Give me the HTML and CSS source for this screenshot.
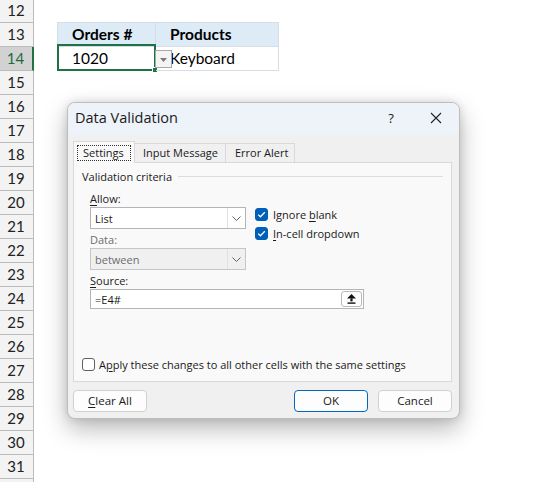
FILE: index.html
```html
<!DOCTYPE html>
<html>
<head>
<meta charset="utf-8">
<link rel="stylesheet" href="styles.css">
</head>
<body>
<div class="sheet">
  <div class="row"><div class="rh">12</div></div>
  <div class="row"><div class="rh">13</div><div class="gap"></div><div class="cell colb th">Orders #</div><div class="cell colc th">Products</div></div>
  <div class="row"><div class="rh selrow">14</div><div class="gap"></div><div class="cell colb td">1020<span class="outline"></span><span class="handle"></span></div><div class="cell colc td">Keyboard<span class="ddbtn"><svg width="7" height="4" viewBox="0 0 7 4"><path d="M0 0H7L3.5 4Z" fill="#7a7a7a"/></svg></span></div></div>
  <div class="row"><div class="rh">15</div></div>
  <div class="row"><div class="rh">16</div></div>
  <div class="row"><div class="rh">17</div></div>
  <div class="row"><div class="rh">18</div></div>
  <div class="row"><div class="rh">19</div></div>
  <div class="row"><div class="rh">20</div></div>
  <div class="row"><div class="rh">21</div></div>
  <div class="row"><div class="rh">22</div></div>
  <div class="row"><div class="rh">23</div></div>
  <div class="row"><div class="rh">24</div></div>
  <div class="row"><div class="rh">25</div></div>
  <div class="row"><div class="rh">26</div></div>
  <div class="row"><div class="rh">27</div></div>
  <div class="row"><div class="rh">28</div></div>
  <div class="row"><div class="rh">29</div></div>
  <div class="row"><div class="rh">30</div></div>
  <div class="row"><div class="rh">31</div></div>
  <div class="row"><div class="rh"></div></div>
</div>

<div class="dialog">
  <div class="titlebar">
    <span class="title">Data Validation</span>
    <span class="help">?</span>
    <span class="close"><svg width="12" height="12" viewBox="0 0 12 12"><path d="M1 1L11 11M11 1L1 11" stroke="#222" stroke-width="1.1"/></svg></span>
  </div>
  <div class="dbody">
    <div class="tabs">
      <div class="tab active"><span class="focus">Settings</span></div>
      <div class="tab">Input Message</div>
      <div class="tab">Error Alert</div>
    </div>
    <div class="panel">
      <div class="grouphead"><span>Validation criteria</span><span class="rule"></span></div>
      <div class="criteria">
        <div class="leftcol">
          <div class="lbl"><u>A</u>llow:</div>
          <div class="select"><span class="val">List</span><span class="arrow"><svg width="9" height="5" viewBox="0 0 9 5"><path d="M0.5 0.5L4.5 4.5L8.5 0.5" fill="none" stroke="#606060" stroke-width="1"/></svg></span></div>
          <div class="lbl dis">Data:</div>
          <div class="select disabled"><span class="val">between</span><span class="arrow"><svg width="9" height="5" viewBox="0 0 9 5"><path d="M0.5 0.5L4.5 4.5L8.5 0.5" fill="none" stroke="#606060" stroke-width="1"/></svg></span></div>
        </div>
        <div class="checks">
          <div class="chk"><span class="box on"><svg width="13" height="13" viewBox="0 0 13 13"><path d="M3.2 6.6L5.4 8.8L9.8 4.2" fill="none" stroke="#fff" stroke-width="1.3"/></svg></span><span>Ignore <u>b</u>lank</span></div>
          <div class="chk"><span class="box on"><svg width="13" height="13" viewBox="0 0 13 13"><path d="M3.2 6.6L5.4 8.8L9.8 4.2" fill="none" stroke="#fff" stroke-width="1.3"/></svg></span><span><u>I</u>n-cell dropdown</span></div>
        </div>
      </div>
      <div class="lbl src"><u>S</u>ource:</div>
      <div class="source"><span class="val">=E4#</span><span class="srcbtn"><svg width="9" height="10" viewBox="0 0 9 10"><path d="M4.5 0L9 4.6H0Z" fill="#111"/><rect x="3.4" y="4.4" width="2.2" height="3" fill="#111"/><rect x="0.5" y="8.4" width="8" height="1.4" fill="#111"/></svg></span></div>
      <div class="chk apply"><span class="box"></span><span>A<u>p</u>ply these changes to all other cells with the same settings</span></div>
    </div>
    <div class="buttons">
      <div class="btn"><u>C</u>lear All</div>
      <div class="spacer"></div>
      <div class="btn primary">OK</div>
      <div class="btn">Cancel</div>
    </div>
  </div>
</div>
</body>
</html>
```
FILE: styles.css
```css
* { box-sizing: border-box; }
html, body { margin: 0; padding: 0; }
body {
  width: 533px;
  height: 482px;
  overflow: hidden;
  background: #fff;
  position: relative;
  font-family: "Lato", "Liberation Sans", sans-serif;
}
u { text-decoration: underline; text-underline-offset: 2px; text-decoration-thickness: 1px; }

.sheet { margin-top: -1px; }
.row { display: flex; height: 24px; align-items: flex-start; }
.rh {
  width: 34px;
  height: 24px;
  flex: none;
  background: #f3f3f3;
  border-right: 1px solid #bcbcbc;
  border-bottom: 1px solid #bcbcbc;
  font-size: 15px;
  color: #222;
  text-align: center;
  line-height: 23px;
  padding-right: 1px;
}
.rh.selrow {
  background: #d2d2d2;
  color: #1d6b3e;
  border-right: 2px solid #217346;
}
.gap { width: 23px; flex: none; }
.cell {
  position: relative;
  height: 24px;
  border-right: 1px solid #d6dde6;
  border-bottom: 1px solid #d6dde6;
  font-size: 15.5px;
  line-height: 23px;
  color: #000;
  padding-left: 14px;
  flex: none;
}
.colb { width: 99px; border-left: 1px solid #d6dde6; }
.colc { width: 123px; padding-left: 14px; }
.th {
  background: #ddebf7;
  font-weight: bold;
  height: 25px;
  margin-top: -1px;
  border-top: 1px solid #d6dde6;
  line-height: 23px;
}
.td { line-height: 23px; }
.outline {
  position: absolute;
  left: -1px;
  top: -3px;
  right: -1px;
  bottom: -1px;
  border: 2px solid #1e7145;
}
.handle {
  position: absolute;
  right: -3px;
  bottom: -3px;
  width: 6px;
  height: 6px;
  background: #1e7145;
  border: 1px solid #fff;
}
.ddbtn {
  position: absolute;
  left: -1px;
  top: 3px;
  width: 17px;
  height: 18px;
  background: #f4f4f4;
  border: 1px solid #a8a8a8;
  display: flex;
  align-items: center;
  justify-content: center;
  padding-top: 1px;
}

/* dialog */
.dialog {
  position: absolute;
  left: 67px;
  top: 102px;
  width: 393px;
  height: 317px;
  border: 1px solid #bdbdbd;
  border-radius: 8px;
  background: #f0f0f0;
  box-shadow: 0 10px 24px rgba(0,0,0,0.28), 0 0 8px rgba(0,0,0,0.12);
  overflow: hidden;
  font-family: "Open Sans", "Noto Sans", sans-serif;
  font-size: 11px;
  color: #1a1a1a;
}
.titlebar {
  height: 32px;
  background: #eef2f9;
  display: flex;
  align-items: center;
  padding-left: 7px;
  padding-bottom: 3px;
}
.title { font-size: 14.5px; flex: 1; color: #1a1a1a; }
.help { font-size: 13px; width: 20px; margin-right: 29px; text-align: center; }
.close { width: 12px; height: 12px; margin-right: 17px; display: flex; }

.dbody { padding: 6px 7px 0 5px; }
.tabs { display: flex; height: 21px; align-items: flex-end; position: relative; z-index: 1; }
.tab {
  height: 19px;
  border: 1px solid #d9d9d9;
  border-bottom: none;
  margin-left: -1px;
  padding: 0 9px;
  line-height: 18px;
  background: #f0f0f0;
  white-space: nowrap;
}
.tab:nth-child(2) { width: 92px; padding-left: 8px; }
.tab:nth-child(3) { width: 70px; padding-left: 9px; }
.tab.active {
  margin-left: 0;
  width: 62px;
  height: 22px;
  margin-bottom: -1px;
  background: #f9f9f9;
  padding: 3px 0 0 3px;
}
.focus {
  display: block;
  width: 54px;
  height: 16px;
  border: 1px dotted #333;
  line-height: 14px;
  padding-left: 5px;
}
.panel {
  height: 220px;
  background: #f9f9f9;
  border: 1px solid #d9d9d9;
  position: relative;
}
.grouphead {
  display: flex;
  align-items: center;
  margin-top: 6px;
  padding-left: 8px;
  height: 15px;
  line-height: 15px;
}
.rule { flex: 1; height: 1px; background: #dcdcdc; margin-left: 6px; margin-right: 8px; }
.criteria { display: flex; padding-left: 16px; margin-top: 7px; }
.leftcol { width: 156px; flex: none; }
.lbl { height: 15px; line-height: 15px; }
.lbl.dis { color: #6d6d6d; margin-top: 3px; }
.select {
  height: 22px;
  margin-top: 1px;
  background: #fff;
  border: 1px solid #b4b4b4;
  display: flex;
  align-items: center;
}
.select .val { flex: 1; padding-left: 4px; }
.select .arrow {
  width: 18px;
  height: 100%;
  border-left: 1px solid #e0e0e0;
  display: flex;
  align-items: center;
  justify-content: center;
}
.select.disabled { background: #f0f0f0; border-color: #c6c6c6; color: #6d6d6d; }
.checks { margin-left: 9px; padding-top: 17px; display: flex; flex-direction: column; gap: 6px; }
.chk { display: flex; align-items: center; height: 13px; gap: 5px; white-space: nowrap; }
.box {
  width: 13px;
  height: 13px;
  flex: none;
  border-radius: 3px;
  border: 1px solid #5f5f5f;
  background: #fff;
  display: flex;
}
.box.on { background: #005fb8; border-color: #005fb8; }
.box.on svg { margin: -1px; }
.lbl.src { margin-top: 3px; padding-left: 16px; }
.source {
  margin-left: 16px;
  margin-top: 1px;
  width: 274px;
  height: 20px;
  background: #fff;
  border: 1px solid #b4b4b4;
  display: flex;
  align-items: center;
}
.source .val { flex: 1; padding-left: 4px; }
.srcbtn {
  width: 21px;
  height: 16px;
  margin-right: 1px;
  border: 1px solid #b8b8b8;
  border-radius: 3px;
  background: #fff;
  display: flex;
  align-items: center;
  justify-content: center;
}
.apply { margin-left: 8px; margin-top: 49px; gap: 4px; }

.buttons { display: flex; margin-top: 8px; gap: 10px; }
.spacer { flex: 1; }
.btn {
  width: 74px;
  height: 22px;
  background: #fdfdfd;
  border: 1px solid #d0d0d0;
  border-radius: 4px;
  text-align: center;
  line-height: 20px;
  font-size: 11.5px;
}
.btn.primary { border-color: #0067c0; }
```
